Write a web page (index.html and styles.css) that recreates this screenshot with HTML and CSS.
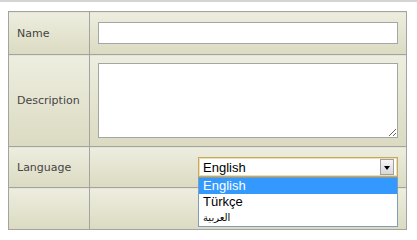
FILE: index.html
```html
<!DOCTYPE html>
<html lang="en">
<head>
    <meta charset="UTF-8">
    <title>Edit item</title>
    <link rel="stylesheet" href="styles.css">
</head>
<body>
    <div class="top-line"></div>
    <div class="form-wrap">
        <table class="form-table">
            <tr class="row-name">
                <td class="label">Name</td>
                <td class="field"><input type="text" class="text-input"></td>
            </tr>
            <tr class="row-desc">
                <td class="label">Description</td>
                <td class="field"><textarea class="text-area"></textarea></td>
            </tr>
            <tr class="row-lang">
                <td class="label">Language</td>
                <td class="field field-right">
                    <div class="select">
                        <span class="select-value">English</span>
                        <span class="select-arrow"></span>
                        <ul class="select-list">
                            <li class="selected">English</li>
                            <li>Türkçe</li>
                            <li class="arabic">العربية</li>
                        </ul>
                    </div>
                </td>
            </tr>
            <tr class="row-empty">
                <td class="label"></td>
                <td class="field"></td>
            </tr>
        </table>
    </div>
</body>
</html>
```

FILE: styles.css
```css
body {
    margin: 0;
    padding: 0;
    background: #ffffff;
    font-family: 'DejaVu Sans', Verdana, sans-serif;
    font-size: 11px;
    color: #444;
}

.top-line {
    height: 2px;
    background: #d4d4d4;
}

.form-wrap {
    padding: 9px 8px;
}

.form-table {
    border-collapse: collapse;
    border: 1px solid #a3a3a3;
}

.form-table td {
    border: 1px solid #a3a3a3;
    background: linear-gradient(#eeeee0, #dbdac1);
    padding: 0;
    vertical-align: middle;
}

.label {
    width: 72px;
    padding-left: 8px !important;
}

.field {
    width: 300px;
    padding: 0 8px !important;
}

.field-right {
    text-align: right;
}

.row-name td { height: 42px; }
.row-desc td { height: 91px; }
.row-lang td { height: 40px; }
.row-empty td { height: 41px; }

.text-input,
.text-area {
    display: block;
    box-sizing: border-box;
    width: 300px;
    margin: 0;
    background: #ffffff;
    border: 1px solid #a5a5a5;
    font-family: 'Liberation Sans', Arial, sans-serif;
    font-size: 13px;
}

.text-input {
    height: 22px;
}

.text-area {
    height: 75px;
}

.select {
    position: relative;
    display: inline-flex;
    align-items: center;
    box-sizing: border-box;
    width: 200px;
    height: 20px;
    vertical-align: middle;
    background: #ffffff;
    border: 1px solid #c8aa5a;
    box-shadow: inset 0 0 0 1px #eadfb4;
    text-align: left;
    font-family: 'Liberation Sans', Arial, sans-serif;
    font-size: 13px;
    color: #000;
}

.select-value {
    flex: 1;
    padding-left: 4px;
    padding-top: 1px;
}

.select-arrow {
    position: relative;
    box-sizing: border-box;
    width: 14px;
    height: 16px;
    margin-right: 3px;
    border: 1px solid #a0a0a0;
    background: linear-gradient(#f6f6f6, #d8d8d8);
}

.select-arrow::after {
    content: "";
    position: absolute;
    left: 3px;
    top: 6px;
    border-left: 3px solid transparent;
    border-right: 3px solid transparent;
    border-top: 4px solid #000;
}

.select-list {
    position: absolute;
    left: -1px;
    top: 19px;
    width: 200px;
    box-sizing: border-box;
    margin: 0;
    padding: 0;
    list-style: none;
    background: #ffffff;
    border: 1px solid #7f9db9;
    z-index: 2;
}

.select-list li {
    height: 16px;
    line-height: 16px;
    padding-left: 4px;
}

.select-list .selected {
    background: #3399ff;
    color: #ffffff;
}

.select-list .arabic {
    font-family: 'DejaVu Sans', sans-serif;
    font-size: 10px;
    unicode-bidi: plaintext;
}
```
